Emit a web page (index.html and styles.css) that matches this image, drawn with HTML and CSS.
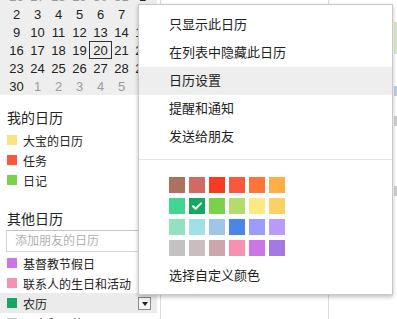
FILE: index.html
```html
<!DOCTYPE html>
<html lang="zh-CN">
<head>
<meta charset="utf-8">
<title>日历</title>
<link rel="stylesheet" href="styles.css">
</head>
<body>
<div class="app">
  <aside class="sidebar">
    <div class="minical">
      <span class="other">26</span><span class="other">27</span><span class="other">28</span><span class="other">29</span><span class="other">30</span><span class="other">31</span><span>1</span>
      <span>2</span><span>3</span><span>4</span><span>5</span><span>6</span><span>7</span><span>8</span>
      <span>9</span><span>10</span><span>11</span><span>12</span><span>13</span><span>14</span><span>15</span>
      <span>16</span><span>17</span><span>18</span><span>19</span><span class="today">20</span><span>21</span><span>22</span>
      <span>23</span><span>24</span><span>25</span><span>26</span><span>27</span><span>28</span><span>29</span>
      <span>30</span><span class="other">1</span><span class="other">2</span><span class="other">3</span><span class="other">4</span><span class="other">5</span><span class="other">6</span>
    </div>

    <h3 class="sec-title first">我的日历</h3>
    <div class="cal-item"><i class="sw c-yellow"></i><span>大宝的日历</span></div>
    <div class="cal-item"><i class="sw c-red"></i><span>任务</span></div>
    <div class="cal-item"><i class="sw c-green"></i><span>日记</span></div>

    <h3 class="sec-title second">其他日历</h3>
    <div class="add-box">添加朋友的日历</div>
    <div class="cal-item"><i class="sw c-purple"></i><span>基督教节假日</span></div>
    <div class="cal-item"><i class="sw c-pink"></i><span>联系人的生日和活动</span></div>
    <div class="cal-item active"><i class="sw c-dgreen"></i><span class="grow">农历</span><b class="drop"></b></div>
    <div class="cal-item"><i class="sw c-gray"></i><span>日出和日落</span></div>
  </aside>

  <main class="grid">
    <div class="col col-a"></div>
    <div class="col col-b"></div>
    <div class="col col-c">
      <div class="evt e1"></div>
      <div class="evt e2"></div>
      <div class="evt e3"></div>
      <div class="evt e4"></div>
    </div>
  </main>
</div>

<div class="menu">
  <div class="menu-item">只显示此日历</div>
  <div class="menu-item">在列表中隐藏此日历</div>
  <div class="menu-item hover">日历设置</div>
  <div class="menu-item">提醒和通知</div>
  <div class="menu-item">发送给朋友</div>
  <div class="menu-sep"></div>
  <div class="palette">
    <i style="background:#ac725e"></i><i style="background:#d06b64"></i><i style="background:#f83a22"></i><i style="background:#fa573c"></i><i style="background:#ff7537"></i><i style="background:#ffad46"></i>
    <i style="background:#42d692"></i><i class="checked" style="background:#16a765"><svg width="16" height="16" viewBox="0 0 16 16"><path d="M4 8.2l2.6 2.6L12 5.4" fill="none" stroke="#fff" stroke-width="2" stroke-linecap="round" stroke-linejoin="round"/></svg></i><i style="background:#7bd148"></i><i style="background:#b3dc6c"></i><i style="background:#fbe983"></i><i style="background:#fad165"></i>
    <i style="background:#92e1c0"></i><i style="background:#9fe1e7"></i><i style="background:#9fc6e7"></i><i style="background:#4986e7"></i><i style="background:#9a9cff"></i><i style="background:#b99aff"></i>
    <i style="background:#c2c2c2"></i><i style="background:#cabdbf"></i><i style="background:#cca6ac"></i><i style="background:#f691b2"></i><i style="background:#cd74e6"></i><i style="background:#a47ae2"></i>
  </div>
  <div class="menu-item custom">选择自定义颜色</div>
</div>
</body>
</html>
```
FILE: styles.css
```css
html, body {
  margin: 0;
  padding: 0;
  width: 397px;
  height: 319px;
  overflow: hidden;
  background: #fff;
  font-family: "Liberation Sans", "Noto Sans CJK SC", sans-serif;
  color: #222;
}

.app {
  display: flex;
  height: 319px;
}

.sidebar {
  width: 157px;
  flex: none;
  margin-right: 3px;
}

.minical {
  margin-top: -13px;
  background: #eeeeee;
  padding-left: 6px;
  display: grid;
  grid-template-columns: repeat(7, 21px);
  grid-auto-rows: 18px;
  font-size: 13px;
}

.minical span {
  display: flex;
  align-items: center;
  justify-content: center;
  color: #222;
}

.minical .other {
  color: #9a9a9a;
}

.minical .today {
  margin: 0 -1px;
  border: 1px solid #333;
}

.sec-title {
  font-size: 14px;
  font-weight: normal;
  line-height: 20px;
  margin: 0 0 2px 7px;
  color: #222;
}

.sec-title.first {
  margin-top: 13px;
}

.sec-title.second {
  margin-top: 19px;
  margin-bottom: 1px;
}

.cal-item {
  height: 20px;
  display: flex;
  align-items: center;
  gap: 6px;
  padding: 0 6px 0 7px;
  font-size: 12px;
  color: #222;
}

.cal-item.active {
  background: #ebebeb;
}

.cal-item .grow {
  flex: 1;
}

.sw {
  width: 10px;
  height: 10px;
  flex: none;
}

.c-yellow { background: #f9e47f; }
.c-red { background: #fa573c; }
.c-green { background: #7bd148; }
.c-purple { background: #cd74e6; }
.c-pink { background: #f691b2; }
.c-dgreen { background: #16a765; }
.c-gray { background: #c2c2c2; }

.drop {
  width: 11px;
  height: 11px;
  border: 1px solid #8a8a8a;
  background: #f6f6f6;
  display: flex;
  align-items: center;
  justify-content: center;
}

.drop::after {
  content: "";
  border-left: 3.5px solid transparent;
  border-right: 3.5px solid transparent;
  border-top: 4px solid #222;
  margin-top: 1px;
}

.add-box {
  margin: 0 0 1px 6px;
  height: 20px;
  width: 160px;
  border: 1px solid #d4d4d4;
  border-top-color: #c4c4c4;
  font-size: 12px;
  line-height: 20px;
  padding-left: 8px;
  color: #b0b0b0;
}

.grid {
  flex: 1;
  display: flex;
  border-left: 1px solid #dcdcdc;
}

.col-a {
  width: 167px;
  border-right: 1px solid #dcdcdc;
}

.col-b {
  width: 65px;
}

.col-c {
  flex: 1;
  display: flex;
  flex-direction: column;
}

.evt { width: 3px; }
.e1 { margin-top: 22px; height: 32px; background: #d6ecc4; }
.e2 { margin-top: 32px; height: 10px; background: #b7cfe8; }
.e3 { margin-top: 20px; height: 10px; background: #cfcfcf; }
.e4 { margin-top: 60px; height: 10px; background: #cfcfcf; }

.menu {
  position: absolute;
  left: 138px;
  top: 4px;
  width: 253px;
  background: #fff;
  border: 1px solid #c8c8c8;
  box-shadow: 0 2px 4px rgba(0, 0, 0, 0.25);
  padding: 6px 0 4px;
  font-size: 13px;
  color: #222;
}

.menu-item {
  height: 28px;
  line-height: 28px;
  padding-left: 30px;
}

.menu-item.hover {
  background: #eeeeee;
}

.menu-sep {
  border-top: 1px solid #e5e5e5;
  margin: 8px 0 17px;
}

.palette {
  padding-left: 30px;
  display: grid;
  grid-template-columns: repeat(6, 16px);
  grid-auto-rows: 16px;
  column-gap: 4px;
  row-gap: 5px;
}

.palette i {
  display: block;
  width: 16px;
  height: 16px;
}

.palette svg {
  display: block;
}

.menu-item.custom {
  margin-top: 6px;
}
```
